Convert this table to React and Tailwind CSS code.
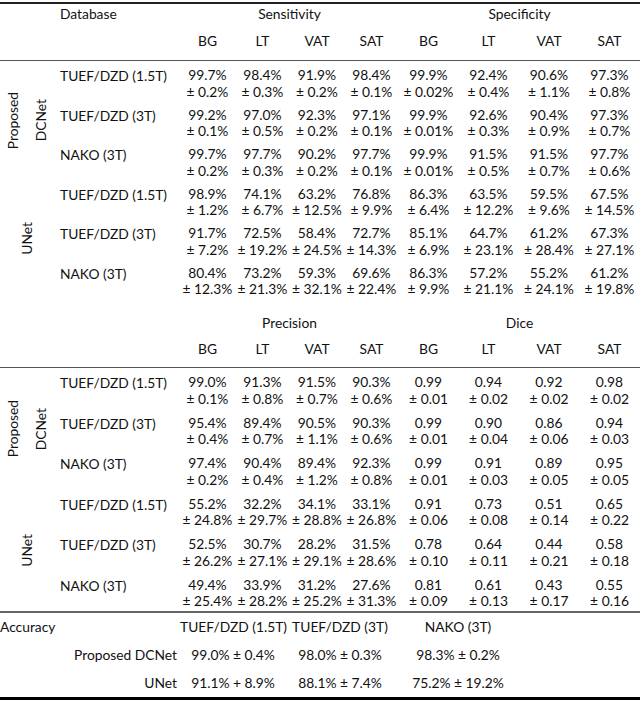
const cols = 'grid grid-cols-[120px_55px_55px_54px_55px_59px_61px_60px_61px]';

const sec1 = {
  groups: ['Sensitivity', 'Specificity'],
  dcnet: [
    ['TUEF/DZD (1.5T)', ['99.7%', '0.2%'], ['98.4%', '0.3%'], ['91.9%', '0.2%'], ['98.4%', '0.1%'], ['99.9%', '0.02%'], ['92.4%', '0.4%'], ['90.6%', '1.1%'], ['97.3%', '0.8%']],
    ['TUEF/DZD (3T)', ['99.2%', '0.1%'], ['97.0%', '0.5%'], ['92.3%', '0.2%'], ['97.1%', '0.1%'], ['99.9%', '0.01%'], ['92.6%', '0.3%'], ['90.4%', '0.9%'], ['97.3%', '0.7%']],
    ['NAKO (3T)', ['99.7%', '0.2%'], ['97.7%', '0.3%'], ['90.2%', '0.2%'], ['97.7%', '0.1%'], ['99.9%', '0.01%'], ['91.5%', '0.5%'], ['91.5%', '0.7%'], ['97.7%', '0.6%']],
  ],
  unet: [
    ['TUEF/DZD (1.5T)', ['98.9%', '1.2%'], ['74.1%', '6.7%'], ['63.2%', '12.5%'], ['76.8%', '9.9%'], ['86.3%', '6.4%'], ['63.5%', '12.2%'], ['59.5%', '9.6%'], ['67.5%', '14.5%']],
    ['TUEF/DZD (3T)', ['91.7%', '7.2%'], ['72.5%', '19.2%'], ['58.4%', '24.5%'], ['72.7%', '14.3%'], ['85.1%', '6.9%'], ['64.7%', '23.1%'], ['61.2%', '28.4%'], ['67.3%', '27.1%']],
    ['NAKO (3T)', ['80.4%', '12.3%'], ['73.2%', '21.3%'], ['59.3%', '32.1%'], ['69.6%', '22.4%'], ['86.3%', '9.9%'], ['57.2%', '21.1%'], ['55.2%', '24.1%'], ['61.2%', '19.8%']],
  ],
};

const sec2 = {
  groups: ['Precision', 'Dice'],
  dcnet: [
    ['TUEF/DZD (1.5T)', ['99.0%', '0.1%'], ['91.3%', '0.8%'], ['91.5%', '0.7%'], ['90.3%', '0.6%'], ['0.99', '0.01'], ['0.94', '0.02'], ['0.92', '0.02'], ['0.98', '0.02']],
    ['TUEF/DZD (3T)', ['95.4%', '0.4%'], ['89.4%', '0.7%'], ['90.5%', '1.1%'], ['90.3%', '0.6%'], ['0.99', '0.01'], ['0.90', '0.04'], ['0.86', '0.06'], ['0.94', '0.03']],
    ['NAKO (3T)', ['97.4%', '0.2%'], ['90.4%', '0.4%'], ['89.4%', '1.2%'], ['92.3%', '0.8%'], ['0.99', '0.01'], ['0.91', '0.03'], ['0.89', '0.05'], ['0.95', '0.05']],
  ],
  unet: [
    ['TUEF/DZD (1.5T)', ['55.2%', '24.8%'], ['32.2%', '29.7%'], ['34.1%', '28.8%'], ['33.1%', '26.8%'], ['0.91', '0.06'], ['0.73', '0.08'], ['0.51', '0.14'], ['0.65', '0.22']],
    ['TUEF/DZD (3T)', ['52.5%', '26.2%'], ['30.7%', '27.1%'], ['28.2%', '29.1%'], ['31.5%', '28.6%'], ['0.78', '0.10'], ['0.64', '0.11'], ['0.44', '0.21'], ['0.58', '0.18']],
    ['NAKO (3T)', ['49.4%', '25.4%'], ['33.9%', '28.2%'], ['31.2%', '25.2%'], ['27.6%', '31.3%'], ['0.81', '0.09'], ['0.61', '0.13'], ['0.43', '0.17'], ['0.55', '0.16']],
  ],
};

const tissues = ['BG', 'LT', 'VAT', 'SAT', 'BG', 'LT', 'VAT', 'SAT'];

const Vertical = ({ children }) => (
  <span className="[writing-mode:vertical-rl] rotate-180 leading-[18px]">{children}</span>
);

const Rows = ({ rows, rowH }) => (
  <div className="flex flex-col">
    {rows.map(([db, ...cells]) => (
      <div key={db} className={`${cols} ${rowH} pt-[6px] leading-[16.5px]`}>
        <div className="pt-[1px]">{db}</div>
        {cells.map(([v, sd], i) => (
          <div key={i} className="flex flex-col items-center">
            <span>{v}</span>
            <span>± {sd}</span>
          </div>
        ))}
      </div>
    ))}
  </div>
);

const Section = ({ data, rowH }) => (
  <div className="flex flex-col">
    <div className="flex">
      <div className="w-[60px] flex items-center pl-[4px] gap-[10px]">
        <Vertical>Proposed</Vertical>
        <Vertical>DCNet</Vertical>
      </div>
      <Rows rows={data.dcnet} rowH={rowH} />
    </div>
    <div className="flex">
      <div className="w-[60px] flex items-center pl-[18px]">
        <Vertical>UNet</Vertical>
      </div>
      <Rows rows={data.unet} rowH={rowH} />
    </div>
  </div>
);

const Header = ({ groups, first, h1, h2 }) => (
  <div className="border-b border-[#555] pl-[60px]">
    <div className={`grid grid-cols-[120px_219px_241px] ${h1} items-center`}>
      <div>{first}</div>
      <div className="text-center">{groups[0]}</div>
      <div className="text-center">{groups[1]}</div>
    </div>
    <div className={`${cols} ${h2} items-center`}>
      <div />
      {tissues.map((t, i) => (
        <div key={i} className="text-center">{t}</div>
      ))}
    </div>
  </div>
);

export default function App() {
  return (
    <div className="w-[640px] h-[701px] bg-white text-[#111] text-[13.8px] whitespace-nowrap font-['Lato',sans-serif] overflow-hidden">
      <div className="pt-[2px]">
        <div className="border-t-2 border-[#222]">
          <Header groups={sec1.groups} first="Database" h1="h-[18px]" h2="h-[38px]" />
          <Section data={sec1} rowH="h-[39.5px]" />
          <div className="pt-[15px]">
            <Header groups={sec2.groups} first="" h1="h-[19px]" h2="h-[35px]" />
          </div>
          <Section data={sec2} rowH="h-[40.5px]" />
          <div className="border-t-2 border-[#666]">
            <div className="grid grid-cols-[180px_106px_108px_128px] h-[28px] items-center">
              <div>Accuracy</div>
              <div className="text-center">TUEF/DZD (1.5T)</div>
              <div className="text-center">TUEF/DZD (3T)</div>
              <div className="text-center">NAKO (3T)</div>
            </div>
            <div className="grid grid-cols-[180px_106px_108px_128px] h-[28px] items-center">
              <div className="text-right pr-[3px]">Proposed DCNet</div>
              <div className="text-center">99.0% ± 0.4%</div>
              <div className="text-center">98.0% ± 0.3%</div>
              <div className="text-center">98.3% ± 0.2%</div>
            </div>
            <div className="grid grid-cols-[180px_106px_108px_128px] h-[28px] items-center">
              <div className="text-right pr-[3px]">UNet</div>
              <div className="text-center">91.1% + 8.9%</div>
              <div className="text-center">88.1% ± 7.4%</div>
              <div className="text-center">75.2% ± 19.2%</div>
            </div>
          </div>
          <div className="border-t-[3px] border-black" />
        </div>
      </div>
    </div>
  );
}
